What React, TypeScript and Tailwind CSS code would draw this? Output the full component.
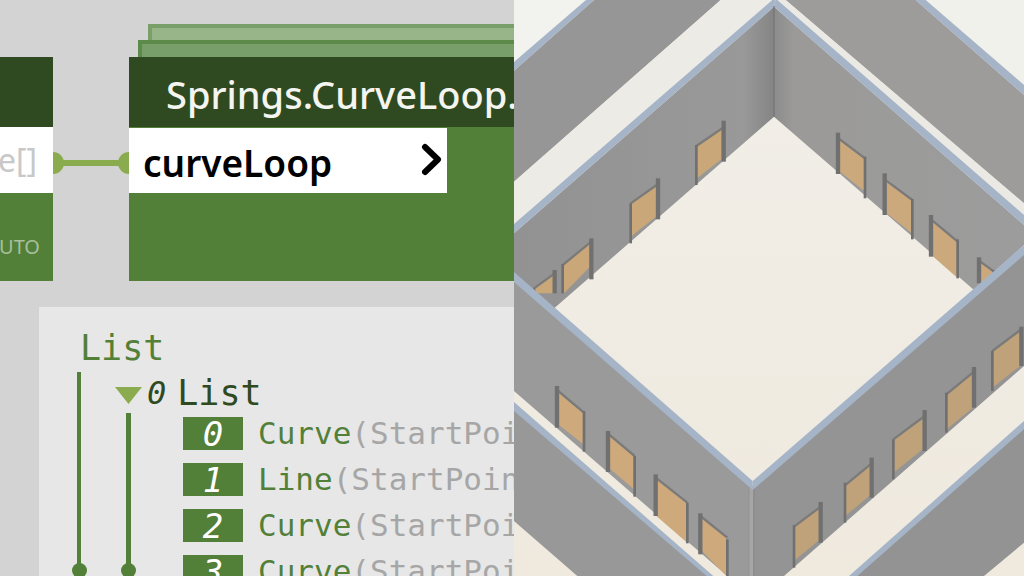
import React from "react";

type D = { x: [number, number]; top: [number, number]; bot: [number, number]; l: [number, number, number]; r: [number, number, number] };

const d = (x1: number, x2: number, t1: number, t2: number, b1: number, b2: number, lx: number, l1: number, l2: number, rx: number, r1: number, r2: number): D => ({
  x: [x1, x2], top: [t1, t2], bot: [b1, b2], l: [lx, l1, l2], r: [rx, r1, r2],
});

const rearLeft: D[] = [
  d(550, 622, 438, 382, 534, 478, 547, 435, 555, 629, 362, 485),
  d(353, 426, 610, 552, 708, 650, 350, 610, 730, 432, 535, 658),
  d(150, 228, 795, 725, 880, 800, 146, 792, 880, 232, 715, 838),
  d(63, 118, 865, 820, 880, 880, 60, 865, 880, 122, 810, 880),
];
const rearRight: D[] = [
  d(978, 1050, 414, 475, 515, 572, 972, 398, 522, 1053, 470, 595),
  d(1118, 1192, 538, 600, 640, 698, 1112, 520, 645, 1195, 597, 718),
  d(1252, 1328, 658, 725, 765, 832, 1251, 645, 770, 1331, 718, 835),
  d(1398, 1435, 782, 815, 845, 880, 1395, 772, 850, 1440, 810, 880),
];
const frontLeft: D[] = [
  d(132, 207, 312, 380, 415, 474, 129, 300, 425, 210, 375, 497),
  d(284, 358, 443, 510, 545, 608, 282, 435, 558, 362, 510, 632),
  d(427, 517, 575, 650, 690, 768, 425, 565, 690, 520, 650, 772),
  d(561, 637, 690, 755, 792, 870, 559, 682, 805, 640, 760, 872),
];
const frontRight: D[] = [
  d(843, 916, 722, 662, 822, 762, 840, 718, 845, 920, 648, 770),
  d(996, 1068, 598, 532, 688, 628, 993, 590, 710, 1073, 515, 635),
  d(1141, 1226, 460, 390, 558, 490, 1138, 460, 580, 1232, 372, 495),
  d(1300, 1377, 325, 257, 428, 365, 1297, 320, 440, 1380, 243, 365),
  d(1438, 1518, 195, 130, 303, 240, 1435, 195, 315, 1522, 122, 240),
];

function Door({ v, fill, thick }: { v: D; fill: string; thick: "l" | "r" }) {
  const lw = thick === "l" ? 13 : 8;
  const rw = thick === "r" ? 13 : 8;
  return (
    <g>
      <polygon points={`${v.x[0]},${v.top[0]} ${v.x[1]},${v.top[1]} ${v.x[1]},${v.bot[1]} ${v.x[0]},${v.bot[0]}`} fill={fill} />
      <line x1={v.l[0]} y1={v.top[0]} x2={v.r[0]} y2={v.top[1]} stroke="#7a7a7a" strokeWidth={7} />
      <line x1={v.l[0]} y1={v.l[1]} x2={v.l[0]} y2={v.l[2]} stroke="#707070" strokeWidth={lw} />
      <line x1={v.r[0]} y1={v.r[1]} x2={v.r[0]} y2={v.r[2]} stroke="#707070" strokeWidth={rw} />
    </g>
  );
}

function Model() {
  const cream = "#efe9df";
  const strip = "#a6b4c8";
  return (
    <svg viewBox="0 0 1530 1728" className="block h-[576px] w-[510px]">
      <defs>
        <linearGradient id="floor" x1="0" y1="0" x2="0" y2="1">
          <stop offset="0" stopColor="#f1eee7" />
          <stop offset="1" stopColor="#efe9de" />
        </linearGradient>
        <linearGradient id="rl" x1="0" y1="0" x2="1" y2="0">
          <stop offset="0" stopColor="#929292" />
          <stop offset="0.88" stopColor="#999999" />
          <stop offset="1" stopColor="#858585" />
        </linearGradient>
        <linearGradient id="rr" x1="0" y1="0" x2="1" y2="0">
          <stop offset="0" stopColor="#8c8c8c" />
          <stop offset="0.08" stopColor="#9b9a99" />
          <stop offset="1" stopColor="#9c9c9c" />
        </linearGradient>
      </defs>
      <rect width="1530" height="1728" fill={cream} />
      <polygon points="0,0 216,0 0,186" fill="#f2f3ee" />
      <polygon points="1235,0 1530,0 1530,255" fill="#f1f1ec" />
      <polygon points="0,212 240,0 620,0 0,545" fill="#969696" />
      <polygon points="0,186 216,0 240,0 0,212" fill={strip} />
      <polygon points="0,545 620,0 775,0 0,672" fill="#ecebe5" />
      <polygon points="815,0 1205,0 1530,285 1530,610" fill="#9d9c9b" />
      <polygon points="1205,0 1235,0 1530,255 1530,285" fill={strip} />
      <polygon points="790,0 815,0 1530,610 1530,645" fill="#ebe9e3" />
      <polygon points="780,350 1530,1000 1530,1728 0,1728 0,1000" fill="url(#floor)" />
      <polygon points="0,700 780,20 780,350 0,1030" fill="url(#rl)" />
      <polygon points="780,20 1530,675 1530,735 1380,870 780,350" fill="url(#rr)" />
      <polygon points="0,672 775,0 785,0 780,20 0,700" fill={strip} />
      <polygon points="785,0 790,0 1530,645 1530,675 780,20" fill={strip} />
      <line x1="780" y1="18" x2="780" y2="350" stroke="#6e6e6e" strokeWidth="3" />
      {rearLeft.map((v, i) => <Door key={i} v={v} fill="#c9a778" thick="r" />)}
      {rearRight.map((v, i) => <Door key={i} v={v} fill="#cba97c" thick="l" />)}
      <g transform="translate(0,858)">
        <polygon points="0,-30 0,315 640,870 716,870 716,600" fill="#9a9a9a" />
        <polygon points="1530,-110 716,600 716,870 810,870 1530,240" fill="#949494" />
        <rect x="704" y="600" width="16" height="270" fill="#a6a6a6" />
        <rect x="704" y="600" width="2" height="270" fill="#8a8a8a" />
        <rect x="718" y="600" width="3" height="270" fill="#848484" />
        <polygon points="0,-42 0,-12 716,612 716,585" fill={strip} />
        <polygon points="1530,-123 1530,-93 716,612 716,585" fill={strip} />
        <polygon points="0,360 0,705 190,870 590,870" fill="#989898" />
        <polygon points="0,348 0,375 578,870 598,870" fill={strip} />
        <polygon points="1530,420 1020,870 1410,870 1530,770" fill="#939393" />
        <polygon points="1530,405 1530,430 1030,870 1005,870" fill={strip} />
        {frontLeft.map((v, i) => <Door key={i} v={v} fill="#cda97b" thick="l" />)}
        {frontRight.map((v, i) => <Door key={i} v={v} fill="#bfa27a" thick="r" />)}
      </g>
    </svg>
  );
}

const mono = "font-['DejaVu_Sans_Mono',monospace]";

function Row({ n, name, args }: { n: string; name: string; args: string }) {
  return (
    <div className={`flex h-[46px] items-start whitespace-nowrap ${mono}`}>
      <div className="flex h-[33px] w-[60px] shrink-0 items-center justify-center bg-[#538038] text-[34px] italic leading-none text-white">{n}</div>
      <div className="ml-[15px] text-[31px] leading-[33px] text-[#538038]">
        {name}
        <span className="text-[#a6a6a6]">{args}</span>
      </div>
    </div>
  );
}

export default function App() {
  return (
    <div className="flex h-[576px] w-[1024px] overflow-hidden bg-[#d3d3d3]">
      <div className="h-[576px] w-[514px] shrink-0 overflow-hidden pt-[57px]">
        <div className="flex h-[224px] font-['Noto_Sans',sans-serif]">
          <div className="flex h-full w-[53px] shrink-0 flex-col">
            <div className="h-[70px] bg-[#2f4a20]" />
            <div className="flex h-[66px] items-center justify-end overflow-hidden whitespace-nowrap bg-white pr-[16px] text-[32px] text-[#c8c8c8]">e[]</div>
            <div className="flex flex-1 items-end justify-end overflow-hidden whitespace-nowrap bg-[#538038] pb-[21px] pr-[13px] text-[20px] leading-[26px] text-[#a9bf9f]">UTO</div>
          </div>
          <div className="relative h-[136px] w-[76px] shrink-0">
            <div className="absolute left-0 top-[95px] h-[22px] w-[11px] rounded-r-full bg-[#8aab4e]" />
            <div className="absolute right-0 top-[95px] h-[22px] w-[11px] rounded-l-full bg-[#8aab4e]" />
            <div className="absolute left-0 right-0 top-[103px] h-[6px] bg-[#8aab4e]" />
          </div>
          <div className="relative w-[385px] shrink-0 bg-[#538038]">
            <div className="absolute left-[19px] top-[-33px] h-[33px] w-[366px] border-[4px] border-b-0 border-r-0 border-[#78a068] bg-[#97b588]" />
            <div className="absolute left-[9px] top-[-17px] h-[17px] w-[376px] border-[4px] border-b-0 border-r-0 border-[#5b8a49] bg-[#789f6a]" />
            <div className="flex h-[70px] items-center overflow-hidden whitespace-nowrap bg-[#2f4a20] pl-[37px] pt-[4px] text-[38px] font-medium leading-none text-[#f4f4f0]">Springs.CurveLoop.</div>
            <div className="mt-[1px] flex h-[65px] w-[318px] items-center justify-between bg-white pl-[14px] pr-[5px] pt-[3px] text-[37px] font-semibold leading-none text-black">
              <span>curveLoop</span>
              <svg width="21" height="33" viewBox="0 0 21 33" fill="none" className="-mt-[6px] block">
                <path d="M4 4 L17 16.5 L4 29" stroke="#000" strokeWidth="6" strokeLinecap="round" strokeLinejoin="round" />
              </svg>
            </div>
          </div>
        </div>
        <div className="ml-[39px] mt-[26px] h-[300px] bg-[#e7e7e7] pl-[38px]">
          <div className={`pl-[3px] pt-[20px] text-[35px] leading-[42px] text-[#538038] ${mono}`}>List</div>
          <div className="flex">
            <div className="relative mt-[3px] h-[197px] w-[4px] shrink-0 bg-[#538038]">
              <div className="absolute -left-[5.5px] top-[191px] h-[15px] w-[15px] rounded-full bg-[#538038]" />
            </div>
            <div className="ml-[34px] min-w-0 flex-1">
              <div className={`mt-[4px] flex h-[40px] items-center whitespace-nowrap ${mono}`}>
                <svg width="27" height="17" viewBox="0 0 27 17" className="mt-[5px] block shrink-0">
                  <polygon points="0,0 27,0 13.5,17" fill="#8aab4e" />
                </svg>
                <span className="ml-[5px] text-[32px] italic leading-none text-[#2f4a20]">0</span>
                <span className="ml-[11px] text-[35px] leading-none text-[#2f4a20]">List</span>
              </div>
              <div className="flex">
                <div className="relative ml-[11px] h-[157px] w-[5px] shrink-0 bg-[#538038]">
                  <div className="absolute -left-[5px] top-[150px] h-[15px] w-[15px] rounded-full bg-[#538038]" />
                </div>
                <div className="ml-[52px] mt-[4px]">
                  <Row n="0" name="Curve" args="(StartPoint" />
                  <Row n="1" name="Line" args="(StartPoint" />
                  <Row n="2" name="Curve" args="(StartPoint" />
                  <Row n="3" name="Curve" args="(StartPoint" />
                </div>
              </div>
            </div>
          </div>
        </div>
      </div>
      <Model />
    </div>
  );
}
